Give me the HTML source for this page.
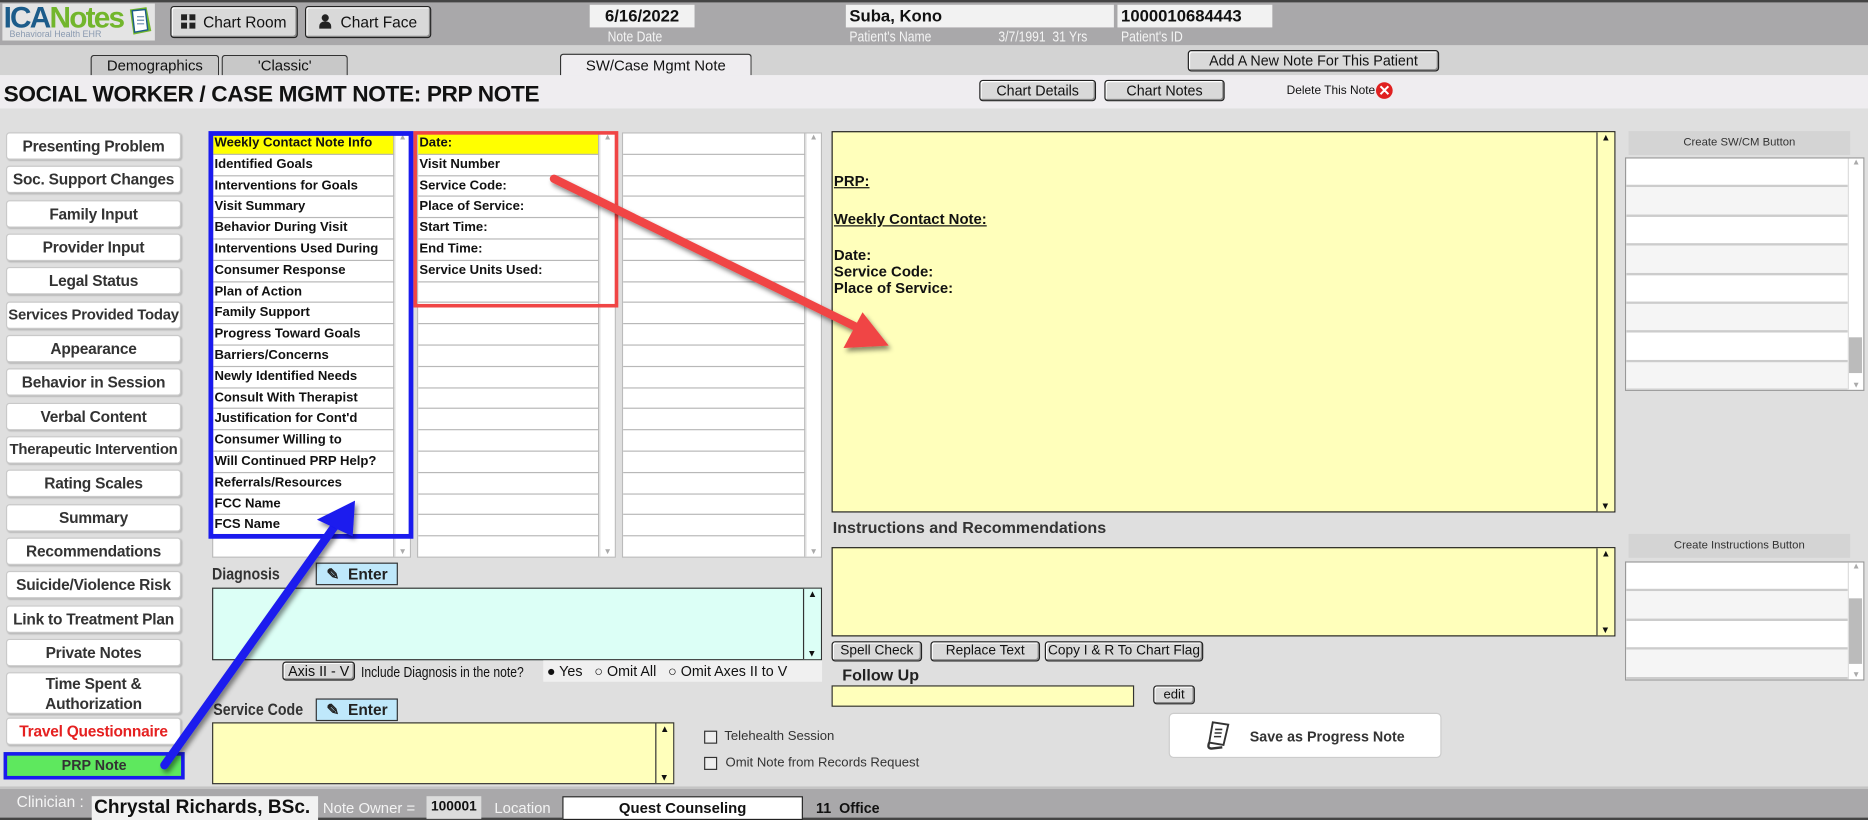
<!DOCTYPE html>
<html><head><meta charset="utf-8">
<style>
html,body{margin:0;padding:0;width:1868px;height:820px;overflow:hidden;background:#dfdfdf;}
#w{position:absolute;left:0;top:0;width:1568px;height:688px;transform:scale(1.19133,1.1919);transform-origin:0 0;font-family:"Liberation Sans",Arial,sans-serif;color:#111;}
.a{position:absolute;box-sizing:border-box;}
.btn{position:absolute;box-sizing:border-box;background:#d9d9d9;border:1px solid #222;border-radius:3px;box-shadow:inset -1px -1px 0 #888,inset 1px 1px 0 #fff;font-size:12px;text-align:center;white-space:nowrap;}
.side{position:absolute;left:5px;width:147px;height:23px;box-sizing:border-box;background:#fff;border:1px solid #c9c9c9;border-radius:3px;box-shadow:1px 1px 1px #bbb;font-size:13px;font-weight:bold;color:#333;text-align:center;line-height:21px;white-space:nowrap;overflow:hidden;letter-spacing:-0.2px;}
.list{position:absolute;background:#fff;border:1px solid #bbb;box-sizing:border-box;overflow:hidden;}
.row{height:17.8px;box-sizing:border-box;border-bottom:1px solid #b8b8b8;font-size:11px;font-weight:bold;line-height:17px;padding-left:1px;white-space:nowrap;margin-right:13px;border-right:1px solid #b8b8b8;}
.sb{position:absolute;right:0;top:0;bottom:0;width:12px;background:#fff;border-left:1px solid #ddd;font-size:7px;color:#aaa;text-align:center;}
.lbl{position:absolute;font-size:13px;white-space:nowrap;}
.w{color:#f4f4f4;}
.box{position:absolute;background:#f2f2f2;font-weight:bold;font-size:14px;padding-left:3px;box-sizing:border-box;line-height:19px;}
.vs{position:absolute;right:0;top:0;bottom:0;width:14px;border-left:1px solid #333;background:#ffffbb;font-size:8px;text-align:center;}
.r{height:24.4px;box-sizing:border-box;border-bottom:2px solid #ccc;}
.n{transform:scaleX(0.85);transform-origin:0 0;}
</style></head><body>
<div id="w">
<div class="a" style="left:0;top:0;width:1568px;height:38px;background:#a9a8aa;border-top:2px solid #444;"></div>
<div class="a" style="left:2px;top:3px;width:128px;height:31px;background:#e4e4e4;"></div>
<div class="a" style="left:3px;top:1px;font-size:25px;font-weight:bold;letter-spacing:-1.5px;"><span style="color:#1c5c8a">ICA</span><span style="color:#72b62c">Notes</span></div>
<div class="a" style="left:8px;top:24px;font-size:7.5px;color:#8a9ab0;">Behavioral Health EHR</div>
<svg class="a" style="left:106px;top:4px" width="24" height="28"><path d="M3 4 L17 2 L21 22 L6 25Z" fill="#72b62c"/><path d="M5 5 L16 4 L18 21 L7 23Z" fill="#fff" stroke="#1c5c8a" stroke-width="1.2"/><path d="M9 10h6M9 13h6M9 16h6" stroke="#6b8db0"/></svg>
<div class="btn" style="left:143px;top:5px;width:107px;height:27px;font-size:13px;line-height:25px;"><span style="display:inline-block;width:12px;height:12px;background:linear-gradient(#d9d9d9,#d9d9d9) 5px 0/2px 12px no-repeat,linear-gradient(#d9d9d9,#d9d9d9) 0 5px/12px 2px no-repeat,#222;vertical-align:-1px;margin-right:6px"></span>Chart Room</div>
<div class="btn" style="left:256px;top:5px;width:106px;height:27px;font-size:13px;line-height:25px;"><span style="display:inline-block;vertical-align:-1px;margin-right:8px;width:10px;height:12px;position:relative"><span style="position:absolute;left:2px;top:0;width:6px;height:6px;border-radius:50%;background:#222"></span><span style="position:absolute;left:0;top:6px;width:10px;height:6px;border-radius:4px 4px 0 0;background:#222"></span></span>Chart Face</div>
<div class="box" style="left:495px;top:4px;width:88px;height:19px;text-align:center;padding:0">6/16/2022</div>
<div class="lbl w n" style="left:510px;top:24px;font-size:12px">Note Date</div>
<div class="box" style="left:710px;top:4px;width:225px;height:19px;">Suba, Kono</div>
<div class="lbl w n" style="left:713px;top:24px;font-size:12px">Patient's Name</div>
<div class="lbl w n" style="left:838px;top:24px;font-size:12px">3/7/1991&nbsp; 31 Yrs</div>
<div class="box" style="left:938px;top:4px;width:130px;height:19px;">1000010684443</div>
<div class="lbl w n" style="left:941px;top:24px;font-size:12px">Patient's ID</div>
<div class="a" style="left:0;top:38px;width:1568px;height:25px;background:#d3d3d3;"></div>
<div class="a" style="left:76px;top:46px;width:108px;height:18px;background:#c8c8c8;border:1px solid #333;border-bottom:none;border-radius:3px 3px 0 0;font-size:12.5px;text-align:center;line-height:17px;">Demographics</div>
<div class="a" style="left:186px;top:46px;width:106px;height:18px;background:#c8c8c8;border:1px solid #333;border-bottom:none;border-radius:3px 3px 0 0;font-size:12.5px;text-align:center;line-height:17px;">'Classic'</div>
<div class="a" style="left:470px;top:45px;width:161px;height:19px;background:#efedf0;border:1px solid #333;border-bottom:none;border-radius:3px 3px 0 0;font-size:12.5px;text-align:center;line-height:19px;">SW/Case Mgmt Note</div>
<div class="btn" style="left:997px;top:42px;width:211px;height:18px;line-height:16px;">Add A New Note For This Patient</div>
<div class="a" style="left:0;top:63px;width:1568px;height:28px;background:#efedf0;"></div>
<div class="a" style="left:3px;top:69px;font-size:19px;font-weight:bold;letter-spacing:-0.3px;white-space:nowrap;">SOCIAL WORKER / CASE MGMT NOTE: PRP NOTE</div>
<div class="btn" style="left:822px;top:67px;width:98px;height:18px;line-height:16px;">Chart Details</div>
<div class="btn" style="left:927px;top:67px;width:101px;height:18px;line-height:16px;">Chart Notes</div>
<div class="lbl" style="left:1080px;top:71px;font-size:10px">Delete This Note</div>
<div class="a" style="left:1155px;top:69px;width:14px;height:14px;border-radius:50%;background:#e02020;color:#fff;font-size:12px;font-weight:bold;text-align:center;line-height:14px;">✕</div>
<div class="side" style="top:111px">Presenting Problem</div>
<div class="side" style="top:139px">Soc. Support Changes</div>
<div class="side" style="top:168px">Family Input</div>
<div class="side" style="top:196px">Provider Input</div>
<div class="side" style="top:224px">Legal Status</div>
<div class="side" style="top:253px;font-size:12.5px">Services Provided Today</div>
<div class="side" style="top:281px">Appearance</div>
<div class="side" style="top:309px">Behavior in Session</div>
<div class="side" style="top:338px">Verbal Content</div>
<div class="side" style="top:366px;font-size:12.5px">Therapeutic Intervention</div>
<div class="side" style="top:394px">Rating Scales</div>
<div class="side" style="top:423px">Summary</div>
<div class="side" style="top:451px">Recommendations</div>
<div class="side" style="top:479px">Suicide/Violence Risk</div>
<div class="side" style="top:508px">Link to Treatment Plan</div>
<div class="side" style="top:536px">Private Notes</div>
<div class="side" style="top:564px;height:35px;line-height:17px;white-space:normal">Time Spent &amp;<br>Authorization</div>
<div class="side" style="top:602px;color:#e52020">Travel Questionnaire</div>
<div class="a" style="left:3px;top:631px;width:152px;height:23px;border:3px solid #1a1aee;background:#5ee85e;font-size:12px;font-weight:bold;text-align:center;line-height:17px;color:#333">PRP Note</div>
<div class="list" style="left:178px;top:111px;width:167px;height:357px;">
<div class="row" style="background:#ffff00">Weekly Contact Note Info</div><div class="row">Identified Goals</div><div class="row">Interventions for Goals</div><div class="row">Visit Summary</div><div class="row">Behavior During Visit</div><div class="row">Interventions Used During</div><div class="row">Consumer Response</div><div class="row">Plan of Action</div><div class="row">Family Support</div><div class="row">Progress Toward Goals</div><div class="row">Barriers/Concerns</div><div class="row">Newly Identified Needs</div><div class="row">Consult With Therapist</div><div class="row">Justification for Cont'd</div><div class="row">Consumer Willing to</div><div class="row">Will Continued PRP Help?</div><div class="row">Referrals/Resources</div><div class="row">FCC Name</div><div class="row">FCS Name</div><div class="row"></div>
<div class="sb">▲<div style="position:absolute;bottom:0;width:12px">▼</div></div></div>
<div class="list" style="left:350px;top:111px;width:167px;height:357px;">
<div class="row" style="background:#ffff00">Date:</div><div class="row">Visit Number</div><div class="row">Service Code:</div><div class="row">Place of Service:</div><div class="row">Start Time:</div><div class="row">End Time:</div><div class="row">Service Units Used:</div><div class="row"></div><div class="row"></div><div class="row"></div><div class="row"></div><div class="row"></div><div class="row"></div><div class="row"></div><div class="row"></div><div class="row"></div><div class="row"></div><div class="row"></div><div class="row"></div><div class="row"></div>
<div class="sb">▲<div style="position:absolute;bottom:0;width:12px">▼</div></div></div>
<div class="list" style="left:522px;top:111px;width:168px;height:357px;">
<div class="row"></div><div class="row"></div><div class="row"></div><div class="row"></div><div class="row"></div><div class="row"></div><div class="row"></div><div class="row"></div><div class="row"></div><div class="row"></div><div class="row"></div><div class="row"></div><div class="row"></div><div class="row"></div><div class="row"></div><div class="row"></div><div class="row"></div><div class="row"></div><div class="row"></div><div class="row"></div>
<div class="sb">▲<div style="position:absolute;bottom:0;width:12px">▼</div></div></div>
<div class="a" style="left:175px;top:110px;width:172px;height:342px;border:4px solid #1a1aee;"></div>
<div class="a" style="left:347px;top:110px;width:172px;height:148px;border:3px solid #f04545;"></div>
<div class="lbl n" style="left:178px;top:473px;font-size:14px;font-weight:bold;color:#333">Diagnosis</div>
<div class="a" style="left:265px;top:472px;width:69px;height:19px;background:#bfe8fb;border:1px solid #333;font-size:13px;font-weight:bold;line-height:17px;padding-left:8px;color:#222">✎&nbsp; Enter</div>
<div class="a" style="left:178px;top:493px;width:512px;height:61px;background:#dcfff6;border:1px solid #333;"><div class="vs" style="background:#dcfff6">▲<div style="position:absolute;bottom:0;width:13px">▼</div></div></div>
<div class="btn" style="left:237px;top:555px;width:61px;height:16px;line-height:14px;font-size:12px">Axis II - V</div>
<div class="lbl n" style="left:303px;top:557px;font-size:12px">Include Diagnosis in the note?</div>
<div class="a" style="left:456px;top:554px;width:234px;height:18px;background:#f0f0f0;font-size:12px;line-height:18px;padding-left:3px;white-space:nowrap">● Yes &nbsp; ○ Omit All &nbsp; ○ Omit Axes II to V</div>
<div class="lbl n" style="left:179px;top:587px;font-size:14px;font-weight:bold;color:#333">Service Code</div>
<div class="a" style="left:265px;top:586px;width:69px;height:19px;background:#bfe8fb;border:1px solid #333;font-size:13px;font-weight:bold;line-height:17px;padding-left:8px;color:#222">✎&nbsp; Enter</div>
<div class="a" style="left:178px;top:606px;width:388px;height:52px;background:#ffffbb;border:1px solid #333;"><div class="vs">▲<div style="position:absolute;bottom:0;width:13px">▼</div></div></div>
<div class="a" style="left:591px;top:613px;width:11px;height:11px;border:1px solid #333;background:#eee"></div>
<div class="lbl" style="left:608px;top:612px;font-size:11px;color:#333">Telehealth Session</div>
<div class="a" style="left:591px;top:635px;width:11px;height:11px;border:1px solid #333;background:#eee"></div>
<div class="lbl" style="left:609px;top:634px;font-size:11px;color:#333">Omit Note from Records Request</div>
<div class="a" style="left:698px;top:110px;width:658px;height:320px;background:#ffffbb;border:1px solid #222;font-size:12.5px;font-weight:bold;">
<div class="vs">▲<div style="position:absolute;bottom:0;width:13px">▼</div></div>
<div style="position:absolute;left:1px;top:34px;text-decoration:underline">PRP:</div>
<div style="position:absolute;left:1px;top:66px;text-decoration:underline">Weekly Contact Note:</div>
<div style="position:absolute;left:1px;top:96px;line-height:14px">Date:<br>Service Code:<br>Place of Service:</div>
</div>
<div class="lbl" style="left:699px;top:435px;font-size:13.5px;font-weight:bold;color:#333">Instructions and Recommendations</div>
<div class="a" style="left:698px;top:459px;width:658px;height:75px;background:#ffffbb;border:1px solid #222;"><div class="vs">▲<div style="position:absolute;bottom:0;width:13px">▼</div></div></div>
<div class="btn" style="left:698px;top:538px;width:76px;height:17px;line-height:15px;font-size:11.5px">Spell Check</div>
<div class="btn" style="left:781px;top:538px;width:92px;height:17px;line-height:15px;font-size:11.5px">Replace Text</div>
<div class="btn" style="left:877px;top:538px;width:133px;height:17px;line-height:15px;font-size:11.5px">Copy I &amp; R To Chart Flag</div>
<div class="lbl" style="left:707px;top:559px;font-size:13.5px;font-weight:bold;color:#222">Follow Up</div>
<div class="a" style="left:698px;top:575px;width:254px;height:18px;background:#ffffbb;border:1px solid #333;"></div>
<div class="btn" style="left:968px;top:575px;width:35px;height:16px;line-height:14px;font-size:11px">edit</div>
<div class="a" style="left:981px;top:598px;width:229px;height:38px;background:#fff;border:1px solid #ccc;border-radius:4px;font-size:12px;font-weight:bold;color:#333;line-height:38px;padding-left:67px;">Save as Progress Note</div>
<svg class="a" style="left:1012px;top:604px" width="22" height="26"><path d="M6 2 L19 4 L15 21 L3 19Z" fill="#fff" stroke="#333" stroke-width="1.6"/><path d="M3 19 Q1 24 5 24 L14 23" fill="none" stroke="#333" stroke-width="2"/><path d="M8 8h6M7.5 11h6M7 14h6" stroke="#333" stroke-width="1.3"/></svg>
<div class="a" style="left:1367px;top:110px;width:186px;height:20px;background:#d4d4d4;font-size:9.5px;text-align:center;line-height:20px;color:#333">Create SW/CM Button</div>
<div class="list" style="left:1364px;top:132px;width:201px;height:196px;border-color:#999">
<div style="margin-right:12px"><div class="r"></div><div class="r" style="background:#f5f5f5"></div><div class="r"></div><div class="r" style="background:#f5f5f5"></div><div class="r"></div><div class="r" style="background:#f5f5f5"></div><div class="r"></div><div class="r" style="background:#f5f5f5"></div></div>
<div class="sb">▲<div style="position:absolute;left:0;top:150px;width:11px;height:30px;background:#bbb"></div><div style="position:absolute;bottom:0;width:12px">▼</div></div></div>
<div class="a" style="left:1367px;top:448px;width:186px;height:20px;background:#d4d4d4;font-size:9.5px;text-align:center;line-height:20px;color:#333">Create Instructions Button</div>
<div class="list" style="left:1364px;top:471px;width:201px;height:100px;border-color:#999">
<div style="margin-right:12px"><div class="r"></div><div class="r" style="background:#f5f5f5"></div><div class="r"></div><div class="r" style="background:#f5f5f5"></div></div>
<div class="sb">▲<div style="position:absolute;left:0;top:30px;width:11px;height:55px;background:#bbb"></div><div style="position:absolute;bottom:0;width:12px">▼</div></div></div>
<div class="a" style="left:0;top:660px;width:1568px;height:28px;background:#a9a8aa;border-top:2px solid #c4c4c4;border-bottom:2px solid #444"></div>
<div class="lbl w" style="left:14px;top:665px;font-size:13px">Clinician :</div>
<div class="a" style="left:77px;top:668px;width:190px;height:20px;background:#f2f2f2;font-size:16px;font-weight:bold;padding-left:2px;line-height:20px;white-space:nowrap">Chrystal Richards, BSc.</div>
<div class="lbl w" style="left:271px;top:671px;font-size:12.5px">Note Owner =</div>
<div class="a" style="left:358px;top:668px;width:46px;height:19px;background:#dcdcdc;font-size:11.5px;font-weight:bold;text-align:center;line-height:19px">100001</div>
<div class="lbl w" style="left:415px;top:671px;font-size:12.5px">Location</div>
<div class="a" style="left:472px;top:668px;width:202px;height:20px;background:#fff;border:1px solid #222;font-size:12.5px;font-weight:bold;text-align:center;line-height:18px">Quest Counseling</div>
<div class="lbl" style="left:685px;top:671px;font-size:12px;font-weight:bold">11&nbsp; Office</div>
<svg class="a" style="left:0;top:0;pointer-events:none" width="1568" height="688">
<defs><filter id="sh"><feDropShadow dx="2" dy="3" stdDeviation="2" flood-opacity="0.45"/></filter></defs>
<g filter="url(#sh)">
<line x1="138" y1="642" x2="282" y2="440" stroke="#1a1aee" stroke-width="7" stroke-linecap="round"/>
<path d="M298 420 L296 450 L266 436Z" fill="#1a1aee"/>
<line x1="465" y1="150" x2="720" y2="275" stroke="#f04545" stroke-width="7" stroke-linecap="round"/>
<path d="M746 290 L708 292 L724 262Z" fill="#f04545"/>
</g></svg>
</div>
</body></html>
